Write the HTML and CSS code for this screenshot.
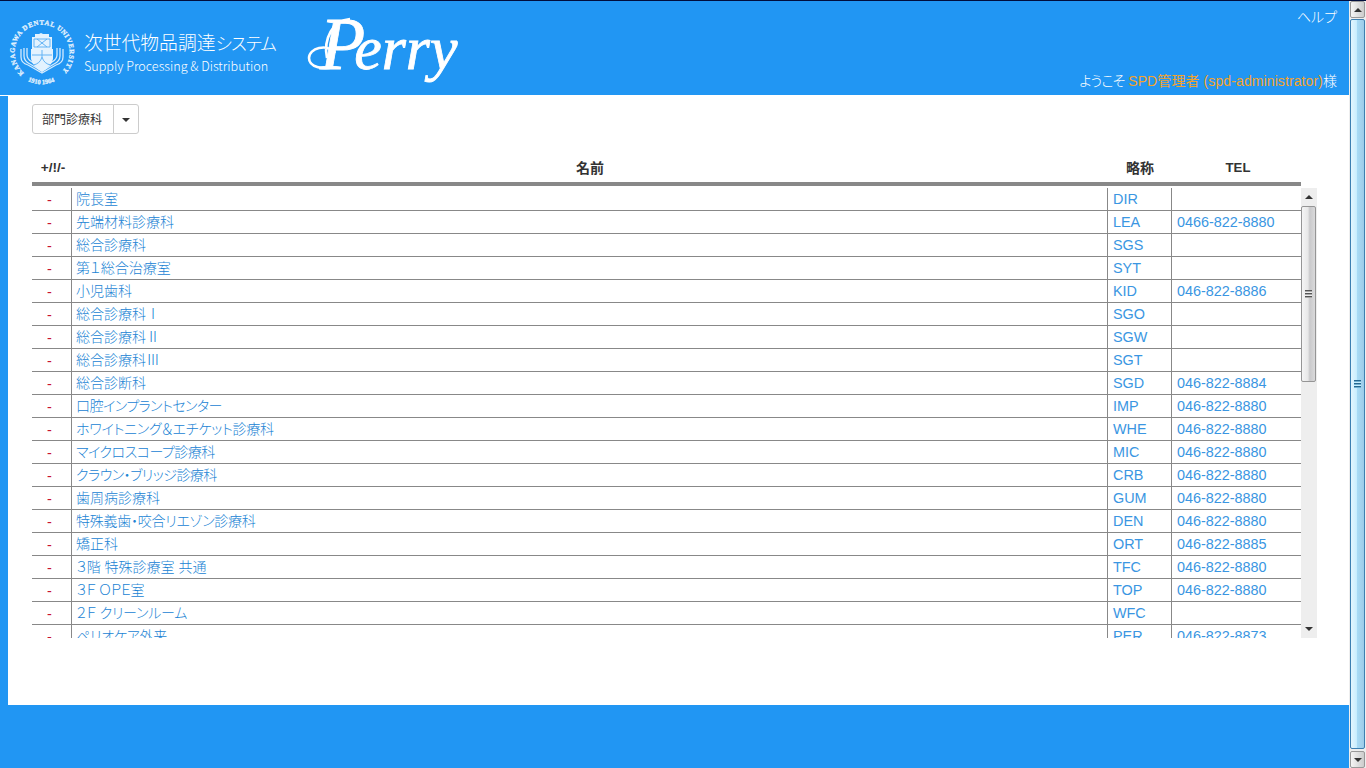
FILE: index.html
```html
<!DOCTYPE html>
<html lang="ja">
<head>
<meta charset="utf-8">
<title>次世代物品調達システム Perry</title>
<link rel="stylesheet" href="styles.css">
</head>
<body>
<div class="page">
  <header class="header">
    <svg class="crest" viewBox="0 0 70 74" width="70" height="74">
      <defs><path id="ring" d="M17 58A27.5 27.5 0 1 1 53 58"/><path id="ring-low" d="M20 65.5A32 32 0 0 0 50 65.5"/></defs>
      <text class="crest-text"><textPath href="#ring" textLength="130" lengthAdjust="spacing">KANAGAWA DENTAL UNIVERSITY</textPath></text>
      <text class="crest-text low"><textPath href="#ring-low" startOffset="1">1910 1964</textPath></text>
      <path class="crest-fill" d="M25 22h3v-3h4l2-1 2 1h6v3h3v12H25z"/>
      <path class="crest-cut" d="M27 24h16v8H27zM30 24l10 8M40 24l-10 8"/>
      <path class="crest-line" d="M14 34v8q0 6 7 8l14 8 14-8q7-2 7-8v-8M17 33v8q0 5 6 8l12 7 12-7q6-3 6-8v-8M20 33v7q0 4 5 7l10 7 10-7q5-3 5-7v-7"/>
      <path class="crest-fill" d="M24 34h22v10q-2 8-11 13-9-5-11-13z"/>
      <path class="crest-cut" d="M25 40h20M35 35v7q-2 7-9 8M35 42q2 7 9 8"/>
    </svg>
    <div class="title">
      <div class="title-main">次世代物品調達<span class="kana">システム</span></div>
      <div class="title-sub">Supply Processing &amp; Distribution</div>
    </div>
    <div class="brand">
      <svg class="flourish" viewBox="0 0 66 60" width="66" height="60"><path d="M26 52C16 55 2 52 2 43C2 33 20 28 28 38M20 43C16 24 26 5 43 4"/></svg>
      <span class="initial">P</span>erry
    </div>
    <div class="account">
      <a class="help">ヘルプ</a>
      <div class="welcome"><span class="hello">ようこそ</span> <span class="user">SPD管理者 (spd-administrator)</span>様</div>
    </div>
  </header>
  <main class="content">
    <div class="split-button"><button class="split-label">部門診療科</button><button class="split-toggle"><i class="caret"></i></button></div>
    <div class="list">
      <div class="row head"><b>+/!/-</b><b>名前</b><b>略称</b><b>TEL</b></div>
      <div class="viewport">
        <div class="rows">
          <div class="row"><i>-</i><a>院長室</a><a>DIR</a><a></a></div>
          <div class="row"><i>-</i><a>先端材料診療科</a><a>LEA</a><a>0466-822-8880</a></div>
          <div class="row"><i>-</i><a>総合診療科</a><a>SGS</a><a></a></div>
          <div class="row"><i>-</i><a>第１総合治療室</a><a>SYT</a><a></a></div>
          <div class="row"><i>-</i><a>小児歯科</a><a>KID</a><a>046-822-8886</a></div>
          <div class="row"><i>-</i><a>総合診療科Ⅰ</a><a>SGO</a><a></a></div>
          <div class="row"><i>-</i><a>総合診療科Ⅱ</a><a>SGW</a><a></a></div>
          <div class="row"><i>-</i><a>総合診療科Ⅲ</a><a>SGT</a><a></a></div>
          <div class="row"><i>-</i><a>総合診断科</a><a>SGD</a><a>046-822-8884</a></div>
          <div class="row"><i>-</i><a class="tighter">口腔インプラントセンター</a><a>IMP</a><a>046-822-8880</a></div>
          <div class="row"><i>-</i><a class="tight">ホワイトニング＆エチケット診療科</a><a>WHE</a><a>046-822-8880</a></div>
          <div class="row"><i>-</i><a class="tighter">マイクロスコープ診療科</a><a>MIC</a><a>046-822-8880</a></div>
          <div class="row"><i>-</i><a class="tighter">クラウン・ブリッジ診療科</a><a>CRB</a><a>046-822-8880</a></div>
          <div class="row"><i>-</i><a>歯周病診療科</a><a>GUM</a><a>046-822-8880</a></div>
          <div class="row"><i>-</i><a class="tight">特殊義歯・咬合リエゾン診療科</a><a>DEN</a><a>046-822-8880</a></div>
          <div class="row"><i>-</i><a>矯正科</a><a>ORT</a><a>046-822-8885</a></div>
          <div class="row"><i>-</i><a>３階 特殊診療室 共通</a><a>TFC</a><a>046-822-8880</a></div>
          <div class="row"><i>-</i><a class="tighter">３Ｆ ＯＰＥ室</a><a>TOP</a><a>046-822-8880</a></div>
          <div class="row"><i>-</i><a class="tight">２Ｆ クリーンルーム</a><a>WFC</a><a></a></div>
          <div class="row"><i>-</i><a class="tight">ペリオケア外来</a><a>PER</a><a>046-822-8873</a></div>
        </div>
        <div class="scroll"><div class="arrow"><i class="up"></i></div><div class="thumb"><i class="grip"></i></div><div class="arrow end"><i class="down"></i></div></div>
      </div>
    </div>
  </main>
  <footer class="footer"></footer>
</div>
<div class="scroll window"><div class="arrow"><i class="up"></i></div><div class="thumb"><i class="grip"></i></div><div class="arrow end"><i class="down"></i></div></div>
</body>
</html>
```
FILE: styles.css
```css
* { box-sizing: border-box; }
body { margin: 0; height: 768px; display: flex; overflow: hidden; background: #fff; border-top: 1px solid #000d3c; font: 14px/20px "Liberation Sans", "Noto Sans CJK JP", sans-serif; font-feature-settings: "palt"; color: #333; }
i { font-style: normal; }
.page { width: 1349px; display: flex; flex-direction: column; }
.header { height: 94px; background: #2196f3; color: #fff; display: flex; }
.crest { margin: 14px 0 0 7px; flex: none; overflow: visible; }
.crest-text { font: bold 6.8px "Liberation Serif", serif; fill: #e3f2fe; stroke: #e3f2fe; stroke-width: .3; }
.crest-text.low { font-size: 6.5px; }
.crest-fill { fill: #e3f2fe; }
.crest-cut { fill: none; stroke: #62b3f5; stroke-width: 1; }
.crest-line { fill: none; stroke: #d3eafd; stroke-width: 1.3; }
.title { margin: 29px 0 0 7px; width: 216px; white-space: nowrap; }
.title-main { font: 300 18.8px/24px "Noto Sans CJK JP", sans-serif; }
.kana { font-size: 17.5px; letter-spacing: -2.6px; }
.title-sub { font: 300 12.6px/20px "Noto Sans CJK JP", sans-serif; margin-top: 1px; }
.brand { position: relative; margin-left: 20px; height: 94px; font: italic 62px/94px "Liberation Serif", serif; white-space: nowrap; -webkit-text-stroke: .8px #fff; }
.initial { font-size: 74px; line-height: 1px; margin-right: -11px; }
.flourish { position: absolute; left: -13px; top: 14px; fill: none; stroke: #fff; stroke-width: 2.6; }
.account { margin-left: auto; padding: 6px 12px 4px 0; display: flex; flex-direction: column; justify-content: space-between; text-align: right; font-weight: 300; }
.hello { letter-spacing: -.9px; }
.user { color: #f5a32b; font-weight: 400; letter-spacing: .1px; }
.content { height: 609px; margin-top: 1px; border-left: 8px solid #2196f3; padding: 8px 0 0 24px; }
.footer { flex: 1; background: #2196f3; }
.split-button { display: flex; }
.split-button button { height: 30px; border: 1px solid #ccc; background: #fff; padding: 0; color: #333; font: 12px/18px "Noto Sans CJK JP", sans-serif; }
.split-button .split-label { width: 82px; border-radius: 3px 0 0 3px; padding-right: 2px; }
.split-button .split-toggle { width: 26px; margin-left: -1px; border-radius: 0 3px 3px 0; display: flex; align-items: center; justify-content: center; }
.caret { border: 4px solid transparent; border-top-color: #333; border-bottom: 0; margin-top: 2px; }
.list { width: 1285px; margin-top: 20px; }
.row { display: grid; grid-template-columns: 40px 1036px 64px 129px; width: 1269px; height: 23px; }
.row.head { height: 32px; border-bottom: 4px solid #888; text-align: center; line-height: 28px; }
.head b:first-child { font-size: 13.6px; padding-left: 2px; }
.head b:last-child { font-size: 13.2px; padding-left: 3px; }
.viewport { margin-top: 2px; height: 450px; overflow: hidden; display: flex; }
.rows { width: 1269px; }
.rows .row > * { border-bottom: 1px solid #888; border-right: 1px solid #888; padding-left: 5px; line-height: 22px; white-space: nowrap; overflow: hidden; color: #3a96e2; font-size: 14.4px; }
.rows .row > :nth-child(2) { font-size: 14px; font-weight: 300; padding-left: 4px; color: #2183d4; }
.rows .row > .tight { letter-spacing: -.25px; }
.rows .row > .tighter { letter-spacing: -.53px; }
.rows .row > :last-child { border-right: 0; }
.rows .row > i { color: #c8142f; text-align: center; padding: 1px 4px 0 0; }
.scroll { width: 16px; background: #eee; display: flex; flex-direction: column; }
.arrow { height: 18px; display: flex; align-items: center; justify-content: center; }
.end { margin-top: auto; }
.up { border: 4px solid transparent; border-bottom-color: #333; border-top: 0; }
.down { border: 4px solid transparent; border-top-color: #333; border-bottom: 0; }
.thumb { height: 176px; width: 15px; border: 1px solid #959595; border-radius: 2px; background: linear-gradient(90deg, #f5f5f5, #e8e8e8 45%, #c9c9cb 60%, #d9d9da); display: flex; align-items: center; justify-content: center; }
.grip { width: 7px; height: 8px; background: repeating-linear-gradient(#555 0 1px, #aaa 1px 2px, #eee 2px 3px); }
.scroll.window { width: 17px; padding: 0 1px; }
.window .arrow { height: 17px; width: 15px; border: 1px solid #999; border-radius: 2px; background: linear-gradient(90deg, #f5f5f5, #ccc); }
.window .thumb { margin-top: 1px; height: 730px; border-color: #3c7fb1; background: linear-gradient(90deg, #e3f6fe, #cbeefe 42%, #a9dbf5 48%, #9ccbe8); }
.window .grip { background: repeating-linear-gradient(#26688f 0 1px, #6fb0d2 1px 2px, #c9effe 2px 3px); }
```
